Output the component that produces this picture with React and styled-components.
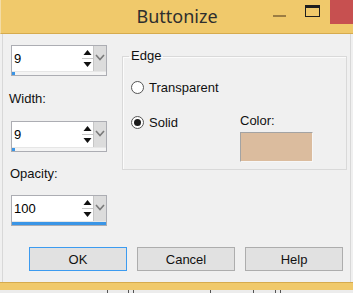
import React from 'react';
import styled, { createGlobalStyle } from 'styled-components';

const GlobalStyle = createGlobalStyle`
  html, body {
    margin: 0;
    padding: 0;
    background: #f0f0f0;
  }
  body {
    font-family: "Liberation Sans", Arial, sans-serif;
    font-size: 13px;
    color: #000;
  }
`;

const Window = styled.div`
  width: 353px;
  height: 293px;
  display: flex;
  flex-direction: column;
  overflow: hidden;
  background: #f0f0f0;
`;

const TitleBar = styled.div`
  height: 33px;
  flex: none;
  display: grid;
  grid-template-columns: 1fr auto 1fr;
  background: #f0c96b;
  border-bottom: 1px solid #d6ab4e;
  border-left: 1px solid #f3dca6;
`;

const Title = styled.div`
  grid-column: 2;
  align-self: center;
  font-family: "Noto Sans", "Open Sans", sans-serif;
  font-size: 18px;
  color: #2e2e2e;
  padding-bottom: 1px;
`;

const Controls = styled.div`
  grid-column: 3;
  justify-self: end;
  display: flex;
  align-items: flex-start;
`;

const ControlButton = styled.div`
  width: ${p => p.$w}px;
  height: 24px;
  display: flex;
  background: ${p => p.$bg || 'transparent'};
`;

const Content = styled.div`
  flex: 1;
  display: flex;
  flex-direction: column;
  margin: 0 2px;
  border-left: 1px solid #d8d8d8;
  border-right: 1px solid #d8d8d8;
`;

const MainRow = styled.div`
  display: flex;
  align-items: flex-start;
  gap: 15px;
  padding: 11px 0 0 8px;
`;

const LeftCol = styled.div`
  width: 96px;
  display: flex;
  flex-direction: column;
`;

const FieldLabel = styled.div`
  height: ${p => p.$h}px;
  display: flex;
  align-items: center;
  margin-left: ${p => p.$shift}px;
  color: #111;
`;

const SpinFrame = styled.div`
  box-sizing: border-box;
  width: 96px;
  height: 31px;
  border: 1px solid #acadb3;
  display: flex;
  flex-direction: column;
  background: #fff;
`;

const SpinTop = styled.div`
  height: 25px;
  display: flex;
`;

const SpinText = styled.div`
  flex: 1;
  padding: 5px 0 0 2px;
  line-height: 15px;
  background: #fff;
`;

const ArrowCol = styled.div`
  width: 11px;
  display: flex;
  background: #fff;
`;

const DropCol = styled.div`
  width: 12px;
  display: flex;
  background: #dcdcdc;
  border-left: 1px solid #c6c6c6;
`;

const Track = styled.div`
  flex: 1;
  display: flex;
  align-items: flex-start;
  border-top: 1px solid #e6e6e6;
  background: #f4f4f4;
`;

const Fill = styled.div`
  width: ${p => p.$pct}%;
  min-width: 3px;
  height: 3px;
  background: #3a95e6;
`;

const Group = styled.fieldset`
  box-sizing: border-box;
  width: 225px;
  margin: 3px 0 0;
  padding: 15px 8px 7px 8px;
  min-width: 0;
  border: 1px solid #d9d9d9;
  box-shadow: inset 1px 1px 0 #fbfbfb;
`;

const Legend = styled.legend`
  padding: 0 2px;
  margin-left: -2px;
  font-size: 13px;
  line-height: 16px;
  color: #111;
`;

const RadioRow = styled.div`
  display: flex;
  align-items: center;
  gap: 5px;
  height: 16px;
  width: ${p => (p.$w ? `${p.$w}px` : 'auto')};
  margin-top: ${p => p.$mt || 0}px;
  color: #111;
`;

const RadioCircle = styled.span`
  box-sizing: border-box;
  width: 13px;
  height: 13px;
  border-radius: 50%;
  border: 1px solid #555;
  background: #fff;
  display: flex;
  align-items: center;
  justify-content: center;

  &::after {
    content: '';
    width: 7px;
    height: 7px;
    border-radius: 50%;
    background: ${p => (p.$checked ? '#1a1a1a' : 'transparent')};
  }
`;

const SolidLine = styled.div`
  display: flex;
  align-items: flex-start;
  margin-top: 18px;
`;

const ColorCol = styled.div`
  display: flex;
  flex-direction: column;
`;

const ColorLabel = styled.div`
  line-height: 15px;
  color: #111;
`;

const Swatch = styled.div`
  box-sizing: border-box;
  width: 73px;
  height: 30px;
  margin-top: 4px;
  background: #dbbc9e;
  border: 1px solid;
  border-color: #a3a3a3 #f7f7f7 #f7f7f7 #a3a3a3;
`;

const ButtonRow = styled.div`
  display: flex;
  gap: 10px;
  margin-top: 21px;
  padding-left: 26px;
`;

const Button = styled.button`
  box-sizing: border-box;
  width: 98px;
  height: 24px;
  padding: 0;
  font-family: "Liberation Sans", Arial, sans-serif;
  font-size: 13px;
  color: #111;
  background: #e1e1e1;
  border: 1px solid ${p => (p.$default ? '#3c9bf0' : '#adadad')};
  border-radius: 0;
`;

const BottomBorder = styled.div`
  height: 7px;
  flex: none;
  background: #f0c96b;
  border-top: 1px solid #d6ab4e;
`;

const BehindStrip = styled.div`
  height: 3px;
  flex: none;
  display: flex;
  background: #ececec;
`;

const UpDown = () => (
  <svg width="11" height="25" viewBox="0 0 11 25">
    <polygon points="1.5,9 9.5,9 5.5,4" fill="#111" />
    <line x1="0" y1="12.5" x2="11" y2="12.5" stroke="#c8c8c8" />
    <polygon points="1.5,16 9.5,16 5.5,21" fill="#111" />
  </svg>
);

const Chevron = () => (
  <svg width="12" height="25" viewBox="0 0 12 25">
    <polyline points="2,9 6,13.5 10,9" fill="none" stroke="#7a7a7a" strokeWidth="1.6" />
  </svg>
);

const SpinBox = ({ value, max }) => (
  <SpinFrame>
    <SpinTop>
      <SpinText>{value}</SpinText>
      <ArrowCol><UpDown /></ArrowCol>
      <DropCol><Chevron /></DropCol>
    </SpinTop>
    <Track>
      <Fill $pct={(value / max) * 100} />
    </Track>
  </SpinFrame>
);

const ticks = [107, 128, 133, 210, 253, 275, 280];

const App = () => {
  return (
    <Window>
      <GlobalStyle />
      <TitleBar>
        <Title>Buttonize</Title>
        <Controls>
          <ControlButton $w={31}>
            <svg width="31" height="24" viewBox="0 0 31 24">
              <rect x="10" y="15" width="13" height="2" fill="#9c7d43" />
            </svg>
          </ControlButton>
          <ControlButton $w={36}>
            <svg width="36" height="24" viewBox="0 0 36 24">
              <rect x="11.5" y="5.5" width="14" height="11" fill="none" stroke="#1e1e1e" />
              <rect x="11" y="5" width="15" height="3" fill="#1e1e1e" />
            </svg>
          </ControlButton>
          <ControlButton $w={23} $bg="#c75050" />
        </Controls>
      </TitleBar>

      <Content>
        <MainRow>
          <LeftCol>
            <SpinBox value={9} max={255} />
            <FieldLabel $h={45} $shift={-2}>Width:</FieldLabel>
            <SpinBox value={9} max={255} />
            <FieldLabel $h={43} $shift={-1}>Opacity:</FieldLabel>
            <SpinBox value={100} max={100} />
          </LeftCol>

          <Group>
            <Legend>Edge</Legend>
            <RadioRow>
              <RadioCircle />
              <span>Transparent</span>
            </RadioRow>
            <SolidLine>
              <RadioRow $w={109} $mt={1}>
                <RadioCircle $checked />
                <span>Solid</span>
              </RadioRow>
              <ColorCol>
                <ColorLabel>Color:</ColorLabel>
                <Swatch />
              </ColorCol>
            </SolidLine>
          </Group>
        </MainRow>

        <ButtonRow>
          <Button $default>OK</Button>
          <Button>Cancel</Button>
          <Button>Help</Button>
        </ButtonRow>
      </Content>

      <BottomBorder />
      <BehindStrip>
        <svg width="353" height="3" viewBox="0 0 353 3">
          {ticks.map(x => (
            <line key={x} x1={x + 0.5} y1="0" x2={x + 0.5} y2="3" stroke="#555" />
          ))}
        </svg>
      </BehindStrip>
    </Window>
  );
};

export default App;
